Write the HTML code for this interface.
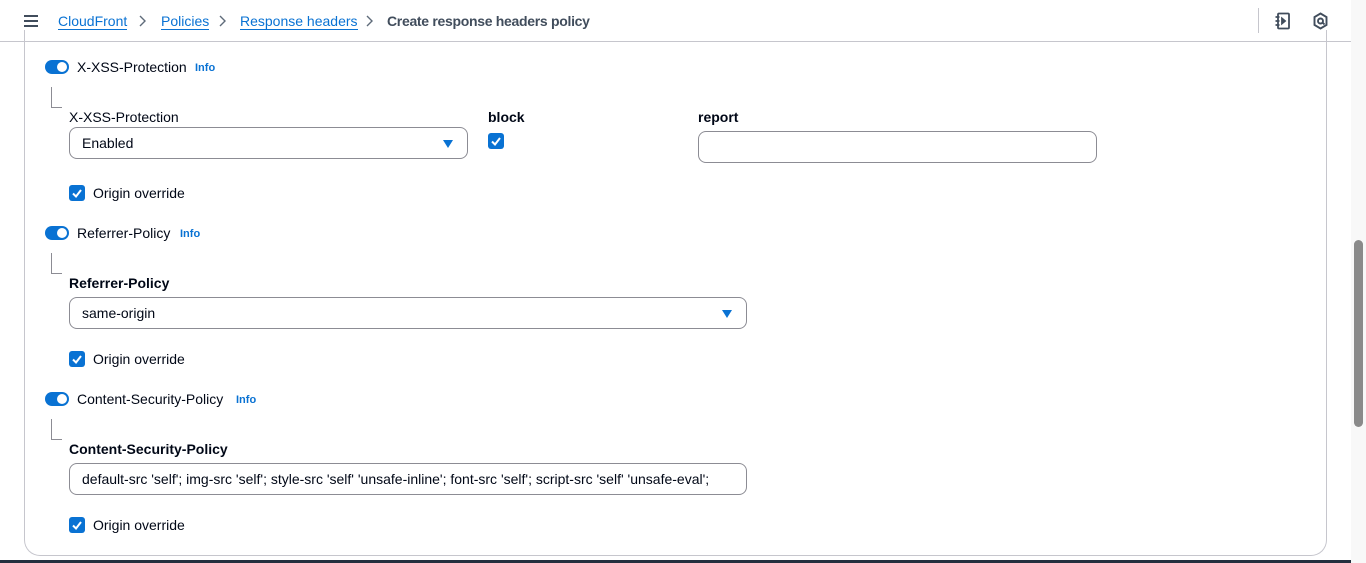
<!DOCTYPE html>
<html><head><meta charset="utf-8"><style>
*{box-sizing:border-box;margin:0;padding:0}
body{width:1366px;height:563px;overflow:hidden;background:#fff;font-family:"Liberation Sans",sans-serif;font-size:14px;color:#000716;position:relative}
.a{position:absolute;white-space:nowrap}
.hdr{position:absolute;left:0;top:0;width:1351px;height:42px;border-bottom:1px solid #c6c6cd;background:#fff}
.lnk{color:#0972d3;border-bottom:1px solid #0972d3;line-height:16px}
.card{position:absolute;left:24px;top:30px;width:1303px;height:526px;border:1px solid #c6c6cd;border-top:none;border-radius:0 0 16px 16px}
.tg{position:absolute;width:24px;height:14px;border-radius:7px;background:#0972d3}
.tg::after{content:"";position:absolute;right:2px;top:2px;width:10px;height:10px;border-radius:50%;background:#fff}
.info{color:#0972d3;font-size:11px;font-weight:bold}
.tree{position:absolute;width:11px;height:21px;border-left:1px solid #8c8c94;border-bottom:1px solid #8c8c94}
.cb{position:absolute;width:16px;height:16px;border-radius:3px;background:#0972d3}
.cb svg{position:absolute;left:0;top:0}
.box{position:absolute;border:1px solid #8c8c94;border-radius:8px;height:32px;padding-left:12px;line-height:30px}
.arr{position:absolute;right:14px;top:12px;width:0;height:0;border-left:5px solid transparent;border-right:5px solid transparent;border-top:8px solid #0972d3}
b{font-weight:bold}
</style></head><body>
<div class="hdr">
 <div class="a" style="left:24px;top:15px;width:14px;height:2px;background:#414d5c"></div>
 <div class="a" style="left:24px;top:20px;width:14px;height:2px;background:#414d5c"></div>
 <div class="a" style="left:24px;top:25px;width:14px;height:2px;background:#414d5c"></div>
 <div class="a" style="left:58px;top:13px"><span class="lnk">CloudFront</span></div>
 <svg class="a" style="left:139px;top:15px" width="8" height="12"><path d="M1 1l5 5-5 5" fill="none" stroke="#5f6b7a" stroke-width="1.4"/></svg>
 <div class="a" style="left:161px;top:13px"><span class="lnk">Policies</span></div>
 <svg class="a" style="left:219px;top:15px" width="8" height="12"><path d="M1 1l5 5-5 5" fill="none" stroke="#5f6b7a" stroke-width="1.4"/></svg>
 <div class="a" style="left:240px;top:13px"><span class="lnk">Response headers</span></div>
 <svg class="a" style="left:366px;top:15px" width="8" height="12"><path d="M1 1l5 5-5 5" fill="none" stroke="#5f6b7a" stroke-width="1.4"/></svg>
 <div class="a" style="left:387px;top:13px;color:#414d5c;font-weight:bold;letter-spacing:-0.3px">Create response headers policy</div>
 <div class="a" style="left:1258px;top:8px;width:1px;height:25px;background:#c6c6cd"></div>
 <svg class="a" style="left:1274px;top:12px" width="18" height="18" viewBox="0 0 18 18" fill="none" stroke="#414d5c" stroke-width="1.8"><rect x="4" y="1.5" width="11" height="15" rx="1"/><path d="M1.5 5h4M1.5 9h4M1.5 13h4"/><path d="M8 6.5l3 2.5-3 2.5z" fill="#414d5c"/></svg>
 <svg class="a" style="left:1312px;top:12px" width="17" height="18" viewBox="0 0 17 18" fill="none" stroke="#414d5c" stroke-width="1.9"><path d="M8.5 1.5l6 3.5v8l-6 3.5-6-3.5v-8z"/><circle cx="8.5" cy="9" r="2.5"/><path d="M10.5 10.5l2 2"/></svg>
</div>
<div class="card"></div>
<div class="a" style="left:1351px;top:0;width:15px;height:563px;background:#f8f8f8"></div>
<div class="a" style="left:1354px;top:240px;width:9px;height:187px;border-radius:5px;background:#8a8a8a"></div>
<div class="a" style="left:0;top:560px;width:1351px;height:3px;background:#232f3e"></div>

<div class="tg" style="left:45px;top:60px"></div>
<div class="a" style="left:77px;top:59px">X-XSS-Protection</div>
<div class="a info" style="left:195px;top:62px">Info</div>
<div class="tree" style="left:51px;top:87px"></div>
<div class="a" style="left:69px;top:109px">X-XSS-Protection</div>
<div class="box" style="left:69px;top:127px;width:399px">Enabled<div class="arr"></div></div>
<div class="a" style="left:488px;top:109px"><b>block</b></div>
<div class="cb" style="left:488px;top:133px"><svg width="16" height="16"><path d="M4 8.5l3 3 5-6.5" fill="none" stroke="#fff" stroke-width="2"/></svg></div>
<div class="a" style="left:698px;top:109px"><b>report</b></div>
<div class="box" style="left:698px;top:131px;width:399px"></div>
<div class="cb" style="left:69px;top:185px"><svg width="16" height="16"><path d="M4 8.5l3 3 5-6.5" fill="none" stroke="#fff" stroke-width="2"/></svg></div>
<div class="a" style="left:93px;top:185px">Origin override</div>

<div class="tg" style="left:45px;top:226px"></div>
<div class="a" style="left:77px;top:225px">Referrer-Policy</div>
<div class="a info" style="left:180px;top:228px">Info</div>
<div class="tree" style="left:51px;top:253px"></div>
<div class="a" style="left:69px;top:275px"><b>Referrer-Policy</b></div>
<div class="box" style="left:69px;top:297px;width:678px">same-origin<div class="arr"></div></div>
<div class="cb" style="left:69px;top:351px"><svg width="16" height="16"><path d="M4 8.5l3 3 5-6.5" fill="none" stroke="#fff" stroke-width="2"/></svg></div>
<div class="a" style="left:93px;top:351px">Origin override</div>

<div class="tg" style="left:45px;top:392px"></div>
<div class="a" style="left:77px;top:391px">Content-Security-Policy</div>
<div class="a info" style="left:236px;top:394px">Info</div>
<div class="tree" style="left:51px;top:419px"></div>
<div class="a" style="left:69px;top:441px"><b>Content-Security-Policy</b></div>
<div class="box" style="left:69px;top:463px;width:678px;white-space:nowrap;overflow:hidden">default-src 'self'; img-src 'self'; style-src 'self' 'unsafe-inline'; font-src 'self'; script-src 'self' 'unsafe-eval';</div>
<div class="cb" style="left:69px;top:517px"><svg width="16" height="16"><path d="M4 8.5l3 3 5-6.5" fill="none" stroke="#fff" stroke-width="2"/></svg></div>
<div class="a" style="left:93px;top:517px">Origin override</div>
</body></html>
